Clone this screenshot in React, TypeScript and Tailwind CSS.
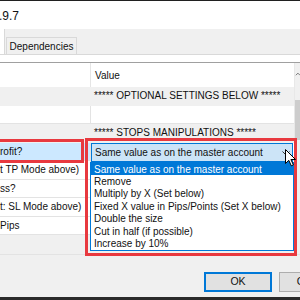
const rows = [
  { left: "", value: "***** OPTIONAL SETTINGS BELOW *****", cat: true },
  { left: "", value: "" },
  { left: "", value: "***** STOPS MANIPULATIONS *****", cat: true },
  { left: "rofit?", value: "", selected: true },
  { left: "t TP Mode above)", value: "" },
  { left: "ss?", value: "" },
  { left: "t: SL Mode above)", value: "" },
  { left: "Pips", value: "" },
  { left: "", value: "", cat: true },
];

const options = [
  "Same value as on the master account",
  "Remove",
  "Multiply by X (Set below)",
  "Fixed X value in Pips/Points (Set X below)",
  "Double the size",
  "Cut in half (if possible)",
  "Increase by 10%",
];

export default function App() {
  return (
    <div className="relative w-[300px] h-[300px] overflow-hidden flex flex-col bg-[#f0f0f0] text-[10px] text-[#111] font-['Liberation_Sans',Arial,sans-serif]">
      <div className="h-[1px] bg-[#202020] shrink-0" />
      {/* title bar */}
      <div className="h-[28px] bg-white flex items-center shrink-0">
        <span className="text-[12px] ml-[-1px] mt-[1px]">.9.7</span>
      </div>
      {/* tabs */}
      <div className="h-[25px] flex shrink-0 bg-[#f0f0f0]">
        <div className="w-[5px] h-full bg-white border-r border-[#d9d9d9]" />
        <div className="mt-[8px] ml-[1px] h-[17px] w-[71px] border border-b-0 border-[#d9d9d9] bg-[#f0f0f0] flex items-center justify-center">
          Dependencies
        </div>
      </div>
      {/* tab page */}
      <div className="bg-white border-t border-[#d9d9d9] pt-[7px] shrink-0">
        <div className="flex border-t border-[#a0a0a0]">
          <div className="flex-1 flex flex-col">
            <div className="h-[24px] flex bg-white">
              <div className="w-[91px] border-r border-[#e5e5e5]" />
              <div className="flex-1 flex items-center pl-[4px]">Value</div>
            </div>
            {rows.map((r, i) => (
              <div
                key={i}
                className={
                  "h-[18.5px] flex border-b " +
                  (r.cat ? "bg-[#f0f0f0] border-[#f0f0f0]" : "bg-white border-[#e3e3e3]")
                }
              >
                <div
                  className={
                    "w-[91px] flex items-center whitespace-nowrap overflow-hidden border-r " +
                    (r.selected
                      ? "bg-[#cce8ff] border-[#e3e3e3]"
                      : r.cat
                      ? "border-[#f0f0f0]"
                      : "border-[#e3e3e3]")
                  }
                >
                  {r.left}
                </div>
                <div className="flex-1 flex items-center pl-[3px] whitespace-nowrap">{r.value}</div>
              </div>
            ))}
          </div>
          {/* scrollbar */}
          <div className="w-[6px] flex flex-col bg-[#f0f0f0] border-l border-[#e8e8e8]">
            <div className="h-[22px] bg-[#f0f0f0] flex items-center justify-center">
              <svg width="6" height="4" viewBox="0 0 6 4">
                <path d="M1 3.5 L3.5 1 L6 3.5" fill="none" stroke="#606060" strokeWidth="1" />
              </svg>
            </div>
            <div className="h-[15px]" />
            <div className="h-[40px] bg-[#cdcdcd]" />
          </div>
        </div>
      </div>
      {/* bottom area */}
      <div className="flex-1 flex justify-end items-start pt-[17px] border-t border-[#e3e3e3]">
        <div className="w-[68px] h-[20px] border-2 border-[#0078d7] bg-[#e1e1e1] flex items-center justify-center text-[10.5px]">
          OK
        </div>
        <div className="w-[68px] h-[20px] ml-[7px] mr-[-47px] border border-[#adadad] bg-[#e1e1e1] flex items-center justify-center text-[10.5px]">
          Cancel
        </div>
      </div>
      <div className="h-[3px] bg-[#2a2a2a] shrink-0" />

      {/* highlight boxes */}
      <div className="absolute left-[-3px] top-[139px] w-[87px] h-[24px] border-[3px] border-[#e8393f]" />
      <div className="absolute left-[85px] top-[138px] w-[212px] h-[118px] border-[3px] border-[#e8393f]" />

      {/* combo box */}
      <div className="absolute left-[91px] top-[143px] w-[202px] h-[19px] border border-[#0078d7] bg-[#cce4f7] flex items-center pl-[3px] whitespace-nowrap">
        Same value as on the master account
        <svg className="absolute left-[190px] top-[7px]" width="8" height="5" viewBox="0 0 8 5">
          <path d="M0.5 0.5 L4 4 L7.5 0.5" fill="none" stroke="#333" strokeWidth="1" />
        </svg>
      </div>
      {/* dropdown list */}
      <div className="absolute left-[90px] top-[162px] w-[204px] h-[89px] border border-[#0078d7] bg-white flex flex-col">
        {options.map((o, i) => (
          <div
            key={o}
            className={
              "h-[12.4px] flex items-center pl-[3px] whitespace-nowrap " +
              (i === 0 ? "bg-[#0078d7] text-white" : "")
            }
          >
            {o}
          </div>
        ))}
      </div>
      {/* mouse cursor */}
      <svg className="absolute left-[285px] top-[149px]" width="12" height="18" viewBox="0 0 12 18">
        <path
          d="M0.5 0.5 L0.5 14.5 L3.8 11.3 L6.3 16.8 L8.4 15.9 L5.9 10.5 L10.5 10.5 Z"
          fill="white"
          stroke="black"
          strokeWidth="1"
        />
      </svg>
    </div>
  );
}
